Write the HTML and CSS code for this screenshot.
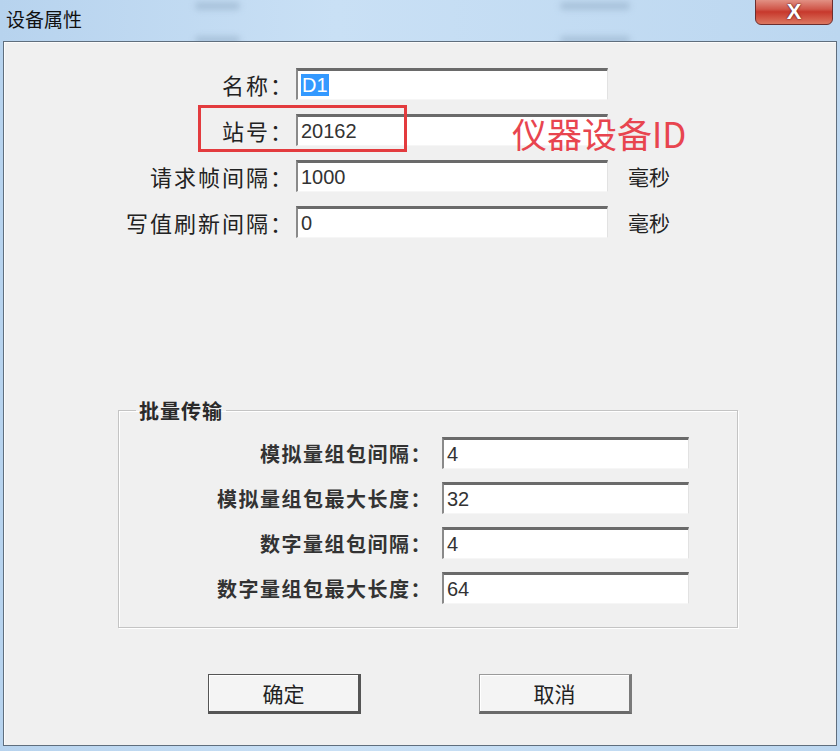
FILE: index.html
```html
<!DOCTYPE html>
<html lang="zh-CN">
<head>
    <meta charset="UTF-8">
    <title>设备属性</title>
    <link rel="stylesheet" href="styles.css">
</head>
<body>
    <div class="window">
        <div class="titlebar">
            <span class="title">设备属性</span>
            <!-- blurred window behind the glass -->
            <span class="ghost ghost-1"></span>
            <span class="ghost ghost-2"></span>
            <span class="ghost ghost-3"></span>
            <span class="ghost ghost-4"></span>
            <div class="close">X</div>
        </div>
        <div class="client">
            <div class="form">
                <label class="label">名称：</label>
                <div class="field"><span class="selected">D1</span></div>
                <span></span>

                <label class="label">站号：</label>
                <div class="field">20162</div>
                <span></span>

                <label class="label">请求帧间隔：</label>
                <div class="field">1000</div>
                <span class="unit">毫秒</span>

                <label class="label">写值刷新间隔：</label>
                <div class="field">0</div>
                <span class="unit">毫秒</span>
            </div>

            <fieldset class="group">
                <legend>批量传输</legend>
                <div class="group-form">
                    <label class="label">模拟量组包间隔：</label>
                    <div class="field">4</div>
                    <label class="label">模拟量组包最大长度：</label>
                    <div class="field">32</div>
                    <label class="label">数字量组包间隔：</label>
                    <div class="field">4</div>
                    <label class="label">数字量组包最大长度：</label>
                    <div class="field">64</div>
                </div>
            </fieldset>

            <div class="buttons">
                <button class="button default">确定</button>
                <button class="button">取消</button>
            </div>

            <!-- annotation drawn over the dialog -->
            <div class="mark-box"></div>
            <div class="mark-text">仪器设备ID</div>
        </div>
    </div>
</body>
</html>
```

FILE: styles.css
```css
body {
    margin: 0;
    background-color: #bcd6ef;
    font-family: "Noto Sans CJK SC", "Liberation Sans", sans-serif;
}
.window {
    width: 840px;
    height: 751px;
    overflow: hidden;
    background: linear-gradient(to right, #b7d3ee, #c9e0f5 40%, #bcd7f0);
}
.titlebar {
    height: 41px;
    position: relative;
    display: flex;
    align-items: center;
    overflow: hidden;
}
.title {
    position: relative;
    z-index: 1;
    margin-left: 6px;
    margin-top: -4px;
    font-size: 19px;
    color: #111;
}
.ghost {
    position: absolute;
    height: 8px;
    border-radius: 4px;
    background-color: #8ea9c2;
    filter: blur(3px);
    opacity: 0.5;
}
.ghost-1 { left: 195px; top: 2px; width: 45px; }
.ghost-2 { left: 195px; top: 36px; width: 45px; }
.ghost-3 { left: 560px; top: 2px; width: 70px; }
.ghost-4 { left: 560px; top: 36px; width: 70px; }
.close {
    position: absolute;
    top: -4px;
    left: 755px;
    width: 78px;
    height: 29px;
    box-sizing: border-box;
    border: 1px solid #6b2e2e;
    border-radius: 0 0 6px 6px;
    background: linear-gradient(to bottom, #e7a396, #d0574a 45%, #c7382c 55%, #dc7760);
    color: #fff;
    font-family: "Liberation Sans", sans-serif;
    font-weight: bold;
    font-size: 22px;
    text-align: center;
    line-height: 30px;
    text-shadow: 0 0 2px #5a1d1d, 0 0 1px #5a1d1d;
}
.client {
    position: relative;
    margin-left: 3px;
    width: 834px;
    height: 705px;
    box-sizing: border-box;
    border: 1px solid #5f6e7d;
    box-shadow: inset 1px 1px 0 #fbfbfb;
    background-color: #f0f0f0;
    color: #222;
}
.form {
    display: grid;
    grid-template-columns: 174px 312px auto;
    column-gap: 2px;
    row-gap: 14px;
    margin: 26px 0 0 116px;
    align-items: center;
}
.label {
    text-align: right;
    font-size: 22px;
    letter-spacing: 2px;
    white-space: nowrap;
}
.field {
    height: 32px;
    box-sizing: border-box;
    background: #fff;
    border-top: 3px solid #6a6a6a;
    border-left: 2px solid #8a8a8a;
    border-right: 1px solid #e2e2e2;
    border-bottom: 1px solid #f6f6f6;
    padding-left: 3px;
    font-family: "Liberation Sans", sans-serif;
    font-size: 20px;
    line-height: 28px;
    color: #333;
}
.selected {
    background: #3399ff;
    color: #fff;
    padding: 0 1px;
}
.unit {
    margin-left: 18px;
    font-size: 21px;
}
.group {
    margin: 158px 0 0 114px;
    width: 620px;
    height: 232px;
    box-sizing: border-box;
    padding: 12px 0 0 13px;
    border: 1px solid #c4c4c4;
    box-shadow: 1px 1px 0 #fff, inset 1px 1px 0 #fff;
}
.group legend {
    margin-left: 4px;
    padding: 0 3px;
    font-size: 20px;
    font-weight: bold;
    letter-spacing: 1px;
    color: #2a2a2a;
}
.group-form {
    display: grid;
    grid-template-columns: 300px 247px;
    column-gap: 10px;
    row-gap: 13px;
    align-items: center;
}
.group-form .label {
    font-size: 20px;
    font-weight: bold;
    letter-spacing: 1.5px;
    color: #333;
}
.buttons {
    display: flex;
    gap: 118px;
    margin: 46px 0 0 204px;
}
.button {
    width: 153px;
    height: 40px;
    box-sizing: border-box;
    background-color: #f4f4f4;
    border: 1px solid #9a9a9a;
    border-right: 3px solid #7a7a7a;
    border-bottom: 3px solid #6a6a6a;
    box-shadow: inset 1px 1px 0 #fff;
    font-family: "Noto Sans CJK SC", sans-serif;
    font-size: 21px;
    color: #222;
    padding: 0;
}
.button.default {
    border-color: #555;
}
.mark-box {
    position: absolute;
    left: 194px;
    top: 63px;
    width: 209px;
    height: 47px;
    box-sizing: border-box;
    border: 3px solid #e33b3e;
}
.mark-text {
    position: absolute;
    left: 508px;
    top: 65px;
    font-size: 35px;
    color: #e8454f;
    white-space: nowrap;
}
```
